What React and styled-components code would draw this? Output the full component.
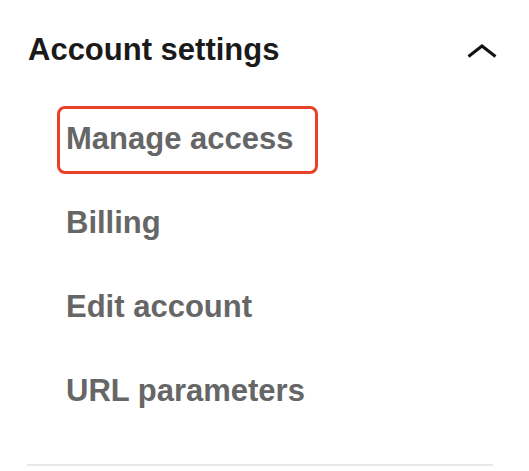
import React from 'react';
import styled, { createGlobalStyle } from 'styled-components';

const items = ['Manage access', 'Billing', 'Edit account', 'URL parameters'];

const App = () => {
  return (
    <>
      <GlobalStyle />
      <Panel>
        <Header>
          <Title>Account settings</Title>
          <Chevron viewBox="0 0 30 14" aria-hidden="true">
            <path d="M1.5 12.5 L15 2 L28.5 12.5" />
          </Chevron>
        </Header>
        <List>
          {items.map((item, i) => (
            <Item key={item} active={i === 0}>
              {item}
            </Item>
          ))}
        </List>
        <Divider />
      </Panel>
    </>
  );
};

const GlobalStyle = createGlobalStyle`
  body {
    margin: 0;
    background: #ffffff;
    font-family: "Liberation Sans", Arial, sans-serif;
  }
`;

const Panel = styled.div`
  display: flex;
  flex-direction: column;
  padding: 32px 36px 0 27px;
`;

const Header = styled.div`
  display: flex;
  justify-content: space-between;
  align-items: center;
`;

const Title = styled.span`
  padding-left: 1px;
  font-size: 31px;
  line-height: 36px;
  font-weight: 700;
  color: #1a1a1a;
`;

const Chevron = styled.svg`
  width: 30px;
  height: 14px;
  margin: 2px -4px 0 0;
  fill: none;
  stroke: #111111;
  stroke-width: 3;
  stroke-linejoin: miter;
`;

const List = styled.ul`
  display: flex;
  flex-direction: column;
  align-items: flex-start;
  gap: 16px;
  margin: 38px 0 0 30px;
  padding: 0;
  list-style: none;
`;

const Item = styled.li`
  padding: 12px 22px 14px 6px;
  border: 3px solid ${(props) => (props.active ? '#e8412a' : 'transparent')};
  border-radius: 8px;
  font-size: 31px;
  line-height: 36px;
  font-weight: 700;
  color: #666666;
`;

const Divider = styled.hr`
  width: 100%;
  height: 2px;
  margin: 38px 0 0;
  border: none;
  background-color: #e8e8e8;
`;

export default App;
